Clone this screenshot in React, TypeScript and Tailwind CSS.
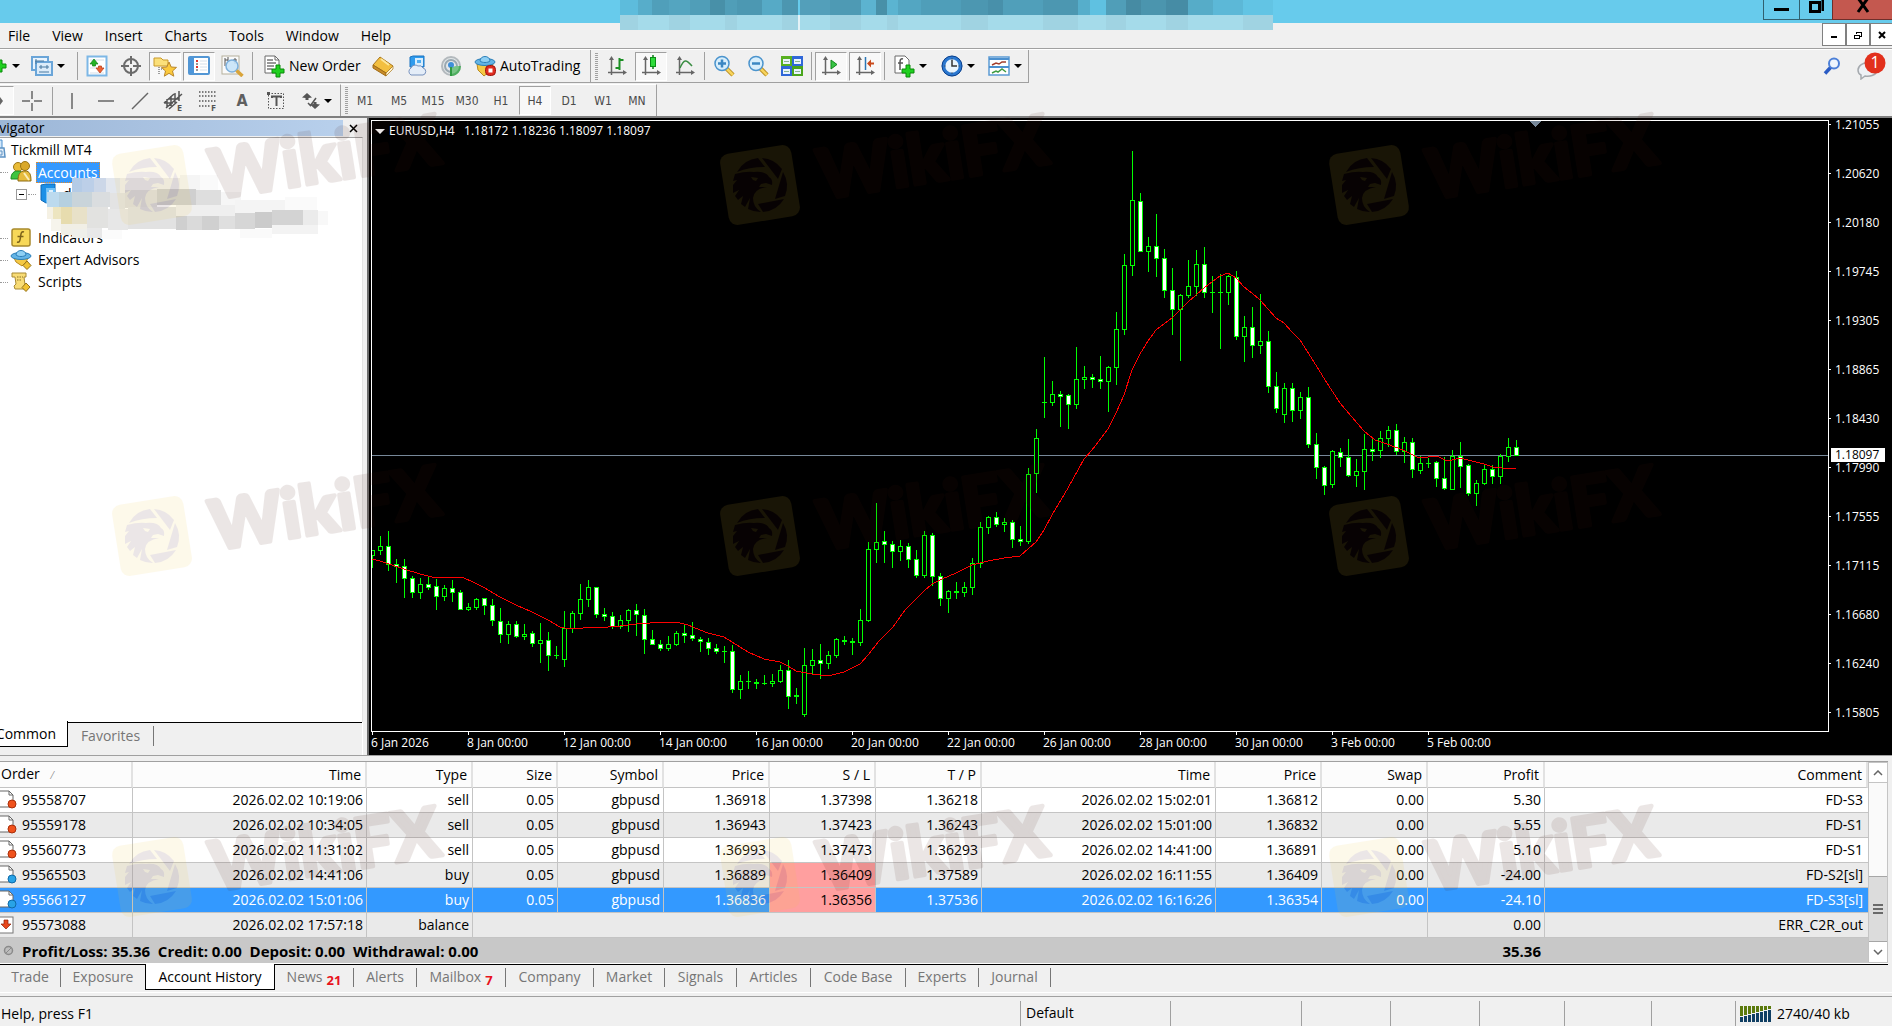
import type { ReactNode } from 'react';
import clsx from 'clsx';

/* ---------- data ---------- */

// high, body top, body bottom, low, 1 = bearish (white body)
const candles: number[][] = [
  [429, 429, 435, 447, 0], [415, 425, 430, 434, 0], [410, 425, 444, 450, 1], [438, 443, 446, 462, 1],
  [438, 445, 458, 477, 1], [455, 457, 472, 477, 1], [457, 463, 472, 478, 0], [455, 463, 467, 469, 1],
  [458, 465, 476, 489, 1], [464, 467, 476, 480, 0], [459, 467, 472, 481, 1], [469, 471, 489, 489, 1],
  [482, 486, 489, 490, 0], [477, 478, 487, 489, 0], [477, 477, 485, 494, 1], [478, 484, 500, 505, 1],
  [487, 500, 514, 522, 1], [500, 503, 514, 523, 0], [500, 503, 516, 517, 1], [503, 513, 516, 519, 0],
  [510, 512, 523, 526, 1], [502, 519, 523, 542, 0], [511, 519, 535, 550, 1], [525, 534, 535, 538, 0],
  [490, 507, 539, 546, 0], [490, 492, 508, 512, 0], [463, 478, 493, 499, 0], [459, 466, 479, 486, 0],
  [466, 466, 494, 497, 1], [487, 493, 496, 500, 1], [491, 495, 506, 508, 1], [494, 499, 506, 508, 0],
  [488, 489, 500, 511, 0], [483, 489, 494, 515, 1], [488, 494, 519, 533, 1], [509, 518, 524, 524, 1],
  [519, 523, 528, 530, 1], [515, 523, 528, 530, 0], [510, 512, 524, 525, 0], [503, 512, 515, 522, 1],
  [501, 514, 518, 520, 1], [516, 518, 521, 531, 1], [517, 521, 528, 534, 1], [523, 527, 531, 533, 1],
  [525, 530, 531, 542, 0], [524, 530, 569, 572, 1], [554, 560, 569, 578, 0], [550, 560, 561, 568, 0],
  [558, 561, 563, 568, 1], [554, 562, 563, 564, 0], [553, 560, 563, 566, 0], [544, 549, 561, 562, 0],
  [539, 549, 576, 588, 1], [567, 574, 576, 583, 0], [527, 544, 594, 596, 0], [528, 539, 545, 553, 0],
  [523, 539, 543, 558, 1], [530, 534, 543, 548, 0], [517, 518, 535, 537, 0], [515, 519, 521, 524, 1],
  [517, 520, 522, 534, 1], [488, 499, 522, 525, 0], [421, 428, 500, 501, 0], [382, 421, 429, 442, 0],
  [410, 420, 424, 442, 1], [420, 423, 431, 447, 1], [419, 425, 431, 440, 0], [422, 425, 439, 447, 1],
  [429, 438, 455, 457, 1], [410, 414, 455, 457, 0], [412, 414, 456, 465, 1], [452, 455, 478, 485, 1],
  [469, 470, 478, 492, 0], [461, 470, 472, 478, 0], [461, 466, 472, 476, 0], [437, 442, 467, 474, 0],
  [401, 406, 443, 447, 0], [395, 396, 407, 413, 0], [391, 396, 404, 406, 1], [397, 401, 404, 411, 0],
  [399, 401, 419, 427, 1], [405, 418, 421, 425, 1], [347, 353, 421, 423, 0], [308, 317, 353, 372, 0],
  [236, 281, 282, 297, 0], [260, 273, 282, 285, 0], [270, 273, 276, 306, 1], [273, 274, 284, 308, 1],
  [226, 258, 284, 288, 0], [245, 256, 259, 268, 0], [253, 256, 259, 267, 1], [235, 258, 261, 268, 1],
  [245, 246, 261, 291, 0], [191, 208, 247, 264, 0], [133, 144, 209, 214, 0], [30, 79, 145, 155, 0],
  [72, 80, 131, 131, 1], [116, 125, 131, 151, 0], [93, 125, 138, 156, 1], [128, 137, 170, 177, 1],
  [147, 169, 189, 214, 1], [173, 174, 189, 240, 0], [139, 165, 175, 177, 0], [129, 143, 166, 175, 0],
  [126, 143, 172, 177, 1], [155, 171, 172, 192, 0], [153, 171, 172, 228, 0], [154, 155, 172, 184, 0],
  [150, 156, 216, 219, 1], [195, 206, 216, 241, 0], [186, 206, 225, 237, 1], [173, 220, 225, 233, 0],
  [210, 220, 266, 272, 1], [251, 265, 288, 292, 1], [262, 267, 294, 302, 0], [262, 267, 290, 301, 1],
  [271, 276, 290, 298, 0], [266, 276, 324, 327, 1], [312, 323, 347, 358, 1], [345, 346, 365, 374, 1],
  [329, 330, 364, 367, 0], [327, 331, 337, 346, 1], [318, 336, 355, 356, 1], [338, 350, 355, 366, 0],
  [313, 328, 351, 369, 0], [317, 328, 331, 340, 1], [310, 317, 330, 337, 0], [305, 309, 318, 326, 0],
  [303, 309, 331, 334, 1], [316, 321, 331, 342, 0], [317, 321, 349, 357, 1], [335, 342, 350, 353, 0],
  [337, 342, 343, 347, 0], [340, 341, 358, 366, 1], [336, 357, 368, 369, 1], [329, 335, 369, 369, 0],
  [321, 335, 346, 367, 1], [343, 344, 373, 375, 1], [359, 362, 373, 385, 0], [344, 348, 363, 364, 0],
  [344, 348, 356, 363, 1], [333, 335, 356, 363, 0], [317, 326, 336, 341, 0], [319, 326, 335, 335, 1],
];

const movingAverage =
  '372,559 380,561 392,565 404,569 420,574 432,577 440,577 448,577 462,577 473,582 483,587 500,597 516,605 532,612 548,620 560,627 565,628 583,628 608,627 620,626 636,624 650,623 658,622 680,623 688,625 700,630 708,633 724,637 732,642 748,652 764,659 780,662 788,666 796,671 812,674 820,675 832,675 844,672 860,664 868,655 879,641 893,627 905,610 916,599 924,591 932,584 942,579 956,573 972,565 988,561 1004,558 1020,556 1036,542 1044,530 1052,515 1068,488 1084,459 1092,450 1108,429 1116,413 1124,395 1132,370 1140,354 1148,341 1156,330 1172,318 1180,310 1188,302 1196,295 1204,288 1212,282 1220,276 1228,273 1236,278 1244,287 1252,293 1260,300 1268,309 1276,318 1284,323 1292,332 1300,340 1307,351 1319,370 1325,380 1340,403 1357,423 1364,431 1375,440 1387,444 1403,450 1417,457 1428,457 1437,456 1445,460 1452,460 1460,458 1472,461 1484,464 1493,467 1502,468 1513,468 1516,469';

const prices = [
  '1.21055', '1.20620', '1.20180', '1.19745', '1.19305', '1.18865', '1.18430',
  '1.17990', '1.17555', '1.17115', '1.16680', '1.16240', '1.15805',
];

const dates = [
  '6 Jan 2026', '8 Jan 00:00', '12 Jan 00:00', '14 Jan 00:00', '16 Jan 00:00', '20 Jan 00:00',
  '22 Jan 00:00', '26 Jan 00:00', '28 Jan 00:00', '30 Jan 00:00', '3 Feb 00:00', '5 Feb 00:00',
];

interface Order {
  id: string;
  open: string;
  type: string;
  price?: string;
  sl?: string;
  tp?: string;
  close?: string;
  closePrice?: string;
  profit: string;
  comment: string;
  stopped?: boolean;
  selected?: boolean;
}

const orders: Order[] = [
  { id: '95558707', open: '2026.02.02 10:19:06', type: 'sell', price: '1.36918', sl: '1.37398', tp: '1.36218', close: '2026.02.02 15:02:01', closePrice: '1.36812', profit: '5.30', comment: 'FD-S3' },
  { id: '95559178', open: '2026.02.02 10:34:05', type: 'sell', price: '1.36943', sl: '1.37423', tp: '1.36243', close: '2026.02.02 15:01:00', closePrice: '1.36832', profit: '5.55', comment: 'FD-S1' },
  { id: '95560773', open: '2026.02.02 11:31:02', type: 'sell', price: '1.36993', sl: '1.37473', tp: '1.36293', close: '2026.02.02 14:41:00', closePrice: '1.36891', profit: '5.10', comment: 'FD-S1' },
  { id: '95565503', open: '2026.02.02 14:41:06', type: 'buy', price: '1.36889', sl: '1.36409', tp: '1.37589', close: '2026.02.02 16:11:55', closePrice: '1.36409', profit: '-24.00', comment: 'FD-S2[sl]', stopped: true },
  { id: '95566127', open: '2026.02.02 15:01:06', type: 'buy', price: '1.36836', sl: '1.36356', tp: '1.37536', close: '2026.02.02 16:16:26', closePrice: '1.36354', profit: '-24.10', comment: 'FD-S3[sl]', stopped: true, selected: true },
  { id: '95573088', open: '2026.02.02 17:57:18', type: 'balance', profit: '0.00', comment: 'ERR_C2R_out' },
];

const columns = [
  { label: 'Order', width: 'w-[133px]' },
  { label: 'Time', width: 'w-[234px]' },
  { label: 'Type', width: 'w-[106px]' },
  { label: 'Size', width: 'w-[85px]' },
  { label: 'Symbol', width: 'w-[106px]' },
  { label: 'Price', width: 'w-[106px]' },
  { label: 'S / L', width: 'w-[106px]' },
  { label: 'T / P', width: 'w-[106px]' },
  { label: 'Time', width: 'w-[234px]' },
  { label: 'Price', width: 'w-[106px]' },
  { label: 'Swap', width: 'w-[106px]' },
  { label: 'Profit', width: 'w-[117px]' },
  { label: 'Comment', width: '' },
];

const terminalTabs = [
  { label: 'Trade', width: 'w-[61px]' },
  { label: 'Exposure', width: 'w-[84px]' },
  { label: 'Account History', width: 'w-[130px]', active: true },
  { label: 'News', width: 'w-[79px]', badge: '21' },
  { label: 'Alerts', width: 'w-[63px]' },
  { label: 'Mailbox', width: 'w-[89px]', badge: '7' },
  { label: 'Company', width: 'w-[88px]' },
  { label: 'Market', width: 'w-[71px]' },
  { label: 'Signals', width: 'w-[72px]' },
  { label: 'Articles', width: 'w-[74px]' },
  { label: 'Code Base', width: 'w-[95px]' },
  { label: 'Experts', width: 'w-[73px]' },
  { label: 'Journal', width: 'w-[72px]' },
];

/* ---------- icons ---------- */

function Svg({ children, w = 22, h = 22 }: { children: ReactNode; w?: number; h?: number }) {
  return (
    <svg width={w} height={h} viewBox={`0 0 ${w} ${h}`} fill="none" className="block shrink-0">
      {children}
    </svg>
  );
}

const plusPath = 'M4 0h4v4h4v4h-4v4h-4v-4h-4v-4h4z';

const Plus = ({ x, y }: { x: number; y: number }) => (
  <path d={plusPath} transform={`translate(${x} ${y})`} fill="#1fd01f" stroke="#0a8a0a" />
);

const ProfilesIcon = () => (
  <Svg>
    <rect x="1" y="2" width="16" height="13" fill="#eaf4fd" stroke="#6aa5d8" strokeWidth="2" />
    <rect x="5" y="7" width="16" height="13" fill="#dcecfa" stroke="#6aa5d8" strokeWidth="2" />
    <path d="M4 6h9M5 4v5M8 12h10M10 10v4M16 10v4M8 17h10" stroke="#49789f" />
  </Svg>
);

const MarketWatchIcon = () => (
  <Svg>
    <rect x="1.5" y="1.5" width="19" height="19" fill="#fff" stroke="#7db7e6" strokeWidth="2" />
    <path d="M4 18h14M4 13h14M4 5h14" stroke="#d5dde6" />
    <path d="M8 4l4 5H9.500v2h-3V9H4z" fill="#24b324" stroke="#12801a" strokeWidth=".7" />
    <path d="M14 18l-4-5h2.500v-2h3v2H18z" fill="#ee6236" stroke="#b93912" strokeWidth=".7" />
  </Svg>
);

const TargetIcon = () => (
  <Svg>
    <circle cx="11" cy="11" r="7" stroke="#6b6b6b" strokeWidth="2" />
    <path d="M11 1v8M11 13v8M1 11h8M13 11h8" stroke="#6b6b6b" strokeWidth="2" />
  </Svg>
);

const FolderStarIcon = () => (
  <Svg w={24}>
    <path d="M1 3h7l2 2h5v6H1z" fill="#fbe07a" stroke="#c9992a" />
    <path d="M6 12v8M8 14h4" stroke="#444" strokeDasharray="1 1" />
    <path d="M16 7l2.200 5 5.300.4-4 3.600 1.300 5.200-4.800-2.900-4.700 2.900 1.200-5.200-4-3.600 5.300-.4z" fill="#fbc93c" stroke="#b8862b" />
  </Svg>
);

const NavigatorIcon = () => (
  <Svg>
    <rect x="1" y="2" width="20" height="17" rx="1" fill="#fff" stroke="#5296d4" strokeWidth="2" />
    <rect x="2" y="3" width="4" height="15" fill="#4d96da" />
    <path d="M8 6h2M8 12h2" stroke="#e0342b" strokeWidth="2" />
    <path d="M8 9h2M8 15h2" stroke="#333" />
    <path d="M12 6h7M12 9h7M12 12h7M12 15h7" stroke="#d3dfea" />
  </Svg>
);

const TesterIcon = () => (
  <Svg w={24}>
    <rect x="1" y="1" width="17" height="18" fill="#fafafa" stroke="#b5b09c" />
    <path d="M4 3v8M7 2v4M14 3v6M4 5h3M12 5h4" stroke="#555" />
    <circle cx="11" cy="11" r="6" fill="#c7e3f8" fillOpacity=".9" stroke="#7db0dc" strokeWidth="1.500" />
    <path d="M15.500 15.500l6 5.500" stroke="#d9a43a" strokeWidth="3.500" />
  </Svg>
);

const NewOrderIcon = () => (
  <Svg w={21} h={23}>
    <path d="M1 1h10l4 4v13H1z" fill="#fff" stroke="#6b6b6b" />
    <path d="M11 1v4h4" stroke="#6b6b6b" />
    <path d="M3 5h6M3 8h9M3 11h7M3 14h5" stroke="#777" strokeWidth="1.500" />
    <Plus x={8} y={10} />
  </Svg>
);

const BookIcon = () => (
  <Svg>
    <path d="M8 2l13 9-7 7L1 10z" fill="#f3bf40" stroke="#a8761b" />
    <path d="M1 10l13 8v3L1 13z" fill="#c98c28" stroke="#a06c16" />
    <path d="M14 18l7-7v3l-7 7z" fill="#fff3cf" stroke="#a8761b" strokeWidth=".7" />
    <path d="M9 4l8 6" stroke="#fde69a" strokeWidth="2" />
  </Svg>
);

const CloudIcon = () => (
  <Svg>
    <path d="M4 2l3-1h11v11H4z" fill="#2f9bed" stroke="#1a73c0" />
    <rect x="9" y="3" width="8" height="8" fill="#d7edfd" />
    <path d="M11 5h4v3h-4z" fill="#52aef0" />
    <path d="M5 20a4 4 0 0 1 0-7 4.500 4.500 0 0 1 7-2 4 4 0 0 1 5 2 3.600 3.600 0 0 1 0 7z" fill="#e4edf8" stroke="#7791bd" />
  </Svg>
);

const SignalIcon = () => (
  <Svg>
    <circle cx="11" cy="11" r="9" fill="#e3e7e9" stroke="#b3b9bd" strokeWidth="2" />
    <circle cx="11" cy="11" r="6" stroke="#9aa8b0" strokeWidth="2" />
    <path d="M12 12v9a9 9 0 0 0 8-10h-4z" fill="#79c486" />
    <path d="M12 20a9 9 0 0 0 8-9" stroke="#4fae60" strokeWidth="2" />
    <circle cx="11" cy="10" r="3" fill="#3f8fd8" />
    <path d="M11 12v9" stroke="#2f9a41" strokeWidth="2" />
  </Svg>
);

const Hat = () => (
  <>
    <ellipse cx="11" cy="7" rx="10" ry="3.500" fill="#63b4e6" stroke="#2c7fb8" />
    <path d="M6 6c0-6 10-6 10 0-2 2-8 2-10 0z" fill="#8fd0f4" stroke="#2c7fb8" />
  </>
);

const AutoTradingIcon = () => (
  <Svg>
    <path d="M3 9h16l-3 7-6 5-6-6z" fill="#f5c945" stroke="#b98a1f" />
    <Hat />
    <rect x="11.500" y="10.500" width="10" height="10" rx="4" fill="#e02b1f" stroke="#9c1710" />
    <rect x="14.500" y="13.500" width="4" height="4" fill="#fff" />
  </Svg>
);

const Axes = ({ children }: { children: ReactNode }) => (
  <Svg w={20}>
    <path d="M4.500 3v17M1 17.500h16" stroke="#666" strokeWidth="1.500" />
    <path d="M4.500 1l-2.500 4h5zM20 17.500l-4-2.500v5z" fill="#666" />
    {children}
  </Svg>
);

const BarIcon = () => (
  <Axes><path d="M12.500 3v12M12.500 5h4M8.500 13h4" stroke="#1c8f25" strokeWidth="2" /></Axes>
);
const CandleIcon = () => (
  <Axes>
    <path d="M12 0v14" stroke="#0b7d16" strokeWidth="1.500" />
    <rect x="9.500" y="2.500" width="5" height="9" fill="#2fdc3b" stroke="#0b8d16" />
  </Axes>
);
const LineIcon = () => <Axes><path d="M5 13c4-9 6-9 12-2" stroke="#3a8d43" strokeWidth="1.500" /></Axes>;
const ScrollIcon = () => <Axes><path d="M10 5l6 4.500-6 4.500z" fill="#37c443" stroke="#15871f" /></Axes>;
const ShiftIcon = () => (
  <Axes>
    <path d="M10.500 2v13" stroke="#2a76b5" strokeWidth="1.500" />
    <path d="M12 8.500l4-4v3h3v2h-3v3z" fill="#c94a1c" />
  </Axes>
);

const ZoomIcon = ({ plus }: { plus?: boolean }) => (
  <Svg>
    <path d="M13 13l7 7" stroke="#b98d22" strokeWidth="4.500" />
    <path d="M13 13l7 7" stroke="#f7d35b" strokeWidth="2.500" />
    <circle cx="9" cy="8.500" r="7" fill="#d8eefb" stroke="#4b94cd" strokeWidth="1.500" />
    <path d={plus ? 'M5 8.500h8M9 4.500v8' : 'M5 8.500h8'} stroke="#3b87c2" strokeWidth="2.500" />
  </Svg>
);

const TileIcon = () => (
  <Svg>
    <rect x="0" y="1" width="11" height="10" fill="#58b020" />
    <rect x="11" y="1" width="11" height="10" fill="#2f67d8" />
    <rect x="0" y="11" width="11" height="10" fill="#2f67d8" />
    <rect x="11" y="11" width="11" height="10" fill="#4aa51c" />
    <path d="M2 4h7v5H2zM13 4h7v5h-7zM2 14h7v5H2zM13 14h7v5h-7z" fill="#e9f3fd" />
    <path d="M3 6.500h5M14 6.500h5M3 16.500h5M14 16.500h5" stroke="#8ab48f" />
  </Svg>
);

const IndicatorIcon = () => (
  <Svg w={21} h={23}>
    <path d="M1 1h10l4 4v13H1z" fill="#fff" stroke="#6b6b6b" />
    <path d="M9 4c-3-1-3 2-3 4v7M4 8h5" stroke="#555" strokeWidth="1.500" />
    <Plus x={8} y={10} />
  </Svg>
);

const ClockIcon = () => (
  <Svg>
    <circle cx="11" cy="11" r="8.500" fill="#e9f4fd" stroke="#2b78d0" strokeWidth="3.500" />
    <circle cx="11" cy="11" r="10" stroke="#0c408c" />
    <path d="M11 5v6h5" stroke="#333" strokeWidth="1.500" />
    <path d="M11 3.500v1M11 17.500v1M3.500 11h1M17.500 11h1" stroke="#333" />
  </Svg>
);

const TemplateIcon = () => (
  <Svg>
    <rect x="1" y="2" width="20" height="18" fill="#fff" stroke="#5b9ad3" strokeWidth="1.500" />
    <path d="M1 4h20M1 12h20" stroke="#4c90cf" strokeWidth="2" />
    <path d="M4 10l4-2 3 1 3-2h4" stroke="#a33f2c" strokeWidth="1.500" />
    <path d="M4 18l4-2 2 1 4-3 4 3" stroke="#3f9c43" strokeWidth="1.500" />
  </Svg>
);

const CrosshairIcon = () => (
  <Svg w={20} h={20}><path d="M10 0v8M10 12v8M0 10h8M12 10h8" stroke="#666" strokeWidth="1.500" /></Svg>
);
const VLineIcon = () => <Svg w={16} h={18}><path d="M8 1v16" stroke="#666" strokeWidth="1.500" /></Svg>;
const HLineIcon = () => <Svg w={16} h={16}><path d="M0 8h16" stroke="#666" strokeWidth="1.500" /></Svg>;
const TrendIcon = () => <Svg w={18} h={18}><path d="M1 17L17 1" stroke="#666" strokeWidth="1.500" /></Svg>;
const ChannelIcon = () => (
  <Svg>
    <path d="M1 13L11 4M3 18L19 4M6 19l8-7M4 9v8M8 6v10M12 3v10M16 1v10M1 13h9M5 9h11" stroke="#555" strokeWidth="1.500" />
    <text x="14" y="21" fontSize="9" fontWeight="700" fill="#555">E</text>
  </Svg>
);
const FiboIcon = () => (
  <Svg>
    <path d="M2 2h18M2 6h18M2 11h18M2 16h11" stroke="#555" strokeWidth="1.500" strokeDasharray="1.500 1.500" />
    <text x="14" y="21" fontSize="9" fontWeight="700" fill="#555">F</text>
  </Svg>
);
const LabelIcon = () => (
  <Svg w={18} h={18}>
    <rect x="1.500" y="1.500" width="15" height="15" stroke="#555" strokeDasharray="1.500 1.500" />
    <path d="M5 6V4.500h9V6M9.500 5v9" stroke="#555" strokeWidth="2" />
    <rect x="0" y="0" width="3" height="3" fill="#555" />
  </Svg>
);
const ArrowsIcon = () => (
  <Svg w={18} h={16}>
    <path d="M5 0l5 4.500L6.500 5v2h-3V5L0 4.500zM13 16l-5-4.500 3.500-.5V9h3v2l3.500.500z" fill="#555" />
    <path d="M6 10l2.500 2.500L14 5" stroke="#555" strokeWidth="1.500" />
  </Svg>
);

const SearchIcon = () => (
  <Svg w={18} h={18}>
    <path d="M8 10l-6 6.500" stroke="#2a5bc4" strokeWidth="3.500" />
    <circle cx="11" cy="6.500" r="5" fill="#eef5fd" stroke="#4d80d8" strokeWidth="2" />
  </Svg>
);

const ServerIcon = () => (
  <Svg>
    <path d="M10 1h8v9h-8z" fill="#d3e8fb" stroke="#4a90cf" />
    <path d="M5 9h15l1 9H5z" fill="#e4eef8" stroke="#5d93c4" strokeWidth="1.500" />
    <path d="M14 12h4v4h-4z" stroke="#5d93c4" />
  </Svg>
);
const AccountsIcon = () => (
  <Svg>
    <circle cx="8" cy="6" r="4.500" fill="#e9bb37" stroke="#9c7616" />
    <circle cx="15" cy="5" r="4.500" fill="#d9a82a" stroke="#9c7616" />
    <path d="M1 18c0-6 3-8 7-8s6 3 6 8z" fill="#3fc43f" stroke="#1a8a1f" />
    <path d="M8 20c0-7 2-10 7-10s6 4 6 10z" fill="#e6bb3c" stroke="#8d6b12" />
    <path d="M14 12l5 7" stroke="#fbeeb8" strokeWidth="2" />
  </Svg>
);
const IndicatorsIcon = () => (
  <Svg>
    <rect x="2" y="2" width="18" height="17" rx="2" fill="#f7d858" stroke="#a8892c" strokeWidth="1.500" />
    <path d="M14 5c-3-1-3 2-3.500 5S10 16 7 15M7.500 9.500h6" stroke="#7c621a" strokeWidth="1.500" />
  </Svg>
);
const ExpertsIcon = () => (
  <Svg>
    <path d="M4 9h14l-2 4-4 4-6-4z" fill="#f5c945" stroke="#b98a1f" />
    <Hat />
    <path d="M17 12l4 4.500-4 4-4-4z" fill="#f1c232" stroke="#96731a" />
  </Svg>
);
const ScriptsIcon = () => (
  <Svg>
    <path d="M2 2h14v4h-2l1 8 3 4H5l-1-3 2-2-1-7H2z" fill="#f8dc76" stroke="#a88a34" />
    <path d="M7 6h6M7 9h5" stroke="#8a7228" strokeDasharray="1.500 1" />
    <path d="M16 12l4 4-4 4.500-4-4z" fill="#f1c232" stroke="#96731a" />
  </Svg>
);
const AccountIcon = () => (
  <Svg w={20}>
    <path d="M2 2l5-1h9v15l-9 4-5-3z" fill="#1b8fe6" stroke="#0f68b5" />
    <path d="M7 5h9v12l-9 3z" fill="#6fc1f8" />
    <path d="M10 8h4" stroke="#fff" strokeWidth="1.500" />
  </Svg>
);

function OrderIcon({ type }: { type: string }) {
  if (type === 'balance') {
    return (
      <Svg w={17} h={18}>
        <rect x="-3" y="1" width="16" height="16" fill="#fff" stroke="#777" />
        <path d="M6 13L1 8h3V4h4v4h3z" fill="#e8481c" stroke="#8e2208" strokeWidth=".7" />
      </Svg>
    );
  }
  return (
    <Svg w={17} h={20}>
      <path d="M-3 1H9l4 4v12H-3z" fill="#fff" stroke="#666" />
      <path d="M9 1v4h4" stroke="#666" />
      <circle cx="12" cy="14" r="4" fill={type === 'sell' ? '#f0521c' : '#29a3e6'} stroke={type === 'sell' ? '#a92f0a' : '#0f6aa8'} />
    </Svg>
  );
}

/* ---------- toolbar parts ---------- */

const Caret = () => <span className="h-0 w-0 border-x-4 border-t-4 border-x-transparent border-t-black" />;
const Sep = () => <span className="mx-[2px] h-7 w-px shrink-0 bg-[#a0a0a0]" />;
const Grip = () => <span className="ml-1 h-[27px] w-[3px] shrink-0 bg-[repeating-linear-gradient(#a0a0a0_0_1px,#f0f0f0_1px_2px)]" />;

function Tool({ label, pressed, children }: { label: string; pressed?: boolean; children: ReactNode }) {
  return (
    <button
      type="button"
      aria-label={label}
      className={clsx(
        'mx-px flex h-[29px] w-8 shrink-0 items-center justify-center',
        pressed && 'border border-[#a0a0a0] border-r-white border-b-white bg-[#f8f8f8]',
      )}
    >
      {children}
    </button>
  );
}

function DropTool({ label, children }: { label: string; children: ReactNode }) {
  return (
    <button type="button" aria-label={label} className="flex h-[29px] w-[47px] shrink-0 items-center justify-center gap-1">
      {children}
      <Caret />
    </button>
  );
}

/* ---------- title bar ---------- */

const titleBlocks = [
  [18, '#5dbcdc'], [14, '#57adca'], [17, '#509fba'], [21, '#54a5c0'], [20, '#509eb8'], [15, '#4890a8'], [12, '#509eb8'],
  [25, '#4c98b2'], [20, '#56aac6'], [16, '#4c96b0'], [2, '#67cbec'], [30, '#539fba'], [31, '#4e9ab4'], [15, '#5cb3d0'],
  [11, '#4890a8'], [11, '#5bb4d1'], [23, '#53a6c2'], [40, '#4f9eb9'], [27, '#4c97b1'], [15, '#4890aa'], [40, '#509fba'],
  [35, '#4c97b1'], [12, '#56aecb'], [16, '#5fc1e1'], [20, '#509eb8'], [15, '#468ba3'], [25, '#4b95ae'], [22, '#468ca5'],
  [25, '#56acc8'], [30, '#5cb8d7'], [30, '#62c4e4'],
] as const;

function TitleBar() {
  return (
    <header className="relative flex h-[23px] shrink-0 justify-between bg-[#67cbec]">
      <div className="absolute top-0 left-[620px] z-10 flex h-[30px] w-[653px] overflow-hidden">
        {titleBlocks.map(([w, color], i) => (
          <div key={i} className="shrink-0" style={{ width: w }}>
            <div className="h-[15px]" style={{ background: color }} />
            <div className={clsx('h-[15px]', i === 10 ? 'bg-[#e4f2f7]' : i % 3 ? 'bg-[#a5dbea]' : 'bg-[#a0d3e2]')} />
          </div>
        ))}
      </div>
      <div />
      <div className="flex h-5 text-black">
        <button type="button" aria-label="Minimize" className="flex w-9 items-center justify-center border-b border-l border-[#31606f]">
          <span className="h-[3px] w-[15px] bg-black" />
        </button>
        <button type="button" aria-label="Restore" className="flex w-[33px] justify-center border-b border-l border-[#31606f]">
          <svg width="16" height="14" fill="none"><path d="M2.500 2.500h9v9h-9zM15 0v11" stroke="#000" strokeWidth="3" /></svg>
        </button>
        <button type="button" aria-label="Close" className="flex w-[60px] justify-center border-b border-l border-[#6e2f2b] bg-[#c4584f]">
          <svg width="14" height="13" fill="none"><path d="M2-2l10 14M12-2L2 12" stroke="#000" strokeWidth="3" /></svg>
        </button>
      </div>
    </header>
  );
}

function MenuBar() {
  return (
    <div className="flex h-[26px] shrink-0 justify-between border-b border-[#a0a0a0]">
      <nav className="flex items-center gap-[22px] pl-2">
        {['File', 'View', 'Insert', 'Charts', 'Tools', 'Window', 'Help'].map((m) => (
          <button key={m} type="button">{m}</button>
        ))}
      </nav>
      <div className="flex h-[23px]">
        <button type="button" aria-label="Minimize chart" className="flex w-6 items-end justify-center border border-[#808080] bg-white pb-[7px]">
          <span className="h-[2px] w-[6px] bg-black" />
        </button>
        <button type="button" aria-label="Restore chart" className="flex w-6 items-center justify-center border border-[#808080] bg-white">
          <svg width="8" height="8" fill="none" shapeRendering="crispEdges">
            <path d="M2 1h6M2.500 1v2M7.500 1v4h-2M0 4h5.500M.5 4v3.500h5V4" stroke="#000" />
          </svg>
        </button>
        <button type="button" aria-label="Close chart" className="flex w-[22px] items-center justify-center border border-r-0 border-[#808080] bg-white">
          <svg width="8" height="8"><path d="M1 1l6 6M7 1L1 7" stroke="#000" strokeWidth="2" /></svg>
        </button>
      </div>
    </div>
  );
}

function Toolbars() {
  return (
    <div className="flex h-[67px] shrink-0 justify-between border-t border-white">
      <div className="flex flex-col">
        <div className="flex h-[34px]">
          <div className="flex h-[33px] w-[591px] items-center border-r border-b border-[#a0a0a0]">
            <button type="button" aria-label="New chart" className="flex h-[29px] w-6 shrink-0 items-center gap-1">
              <Svg w={8} h={14}><Plus x={-6} y={1} /></Svg>
              <Caret />
            </button>
            <DropTool label="Profiles"><ProfilesIcon /></DropTool>
            <span className="w-1 shrink-0" />
            <Sep />
            <Tool label="Market Watch"><MarketWatchIcon /></Tool>
            <Tool label="Data Window"><TargetIcon /></Tool>
            <Tool label="Navigator" pressed><FolderStarIcon /></Tool>
            <Tool label="Terminal" pressed><NavigatorIcon /></Tool>
            <Tool label="Strategy Tester"><TesterIcon /></Tool>
            <Sep />
            <button type="button" className="flex w-[111px] shrink-0 items-center gap-1 pl-[9px] whitespace-nowrap">
              <NewOrderIcon />New Order
            </button>
            <Tool label="MetaEditor"><BookIcon /></Tool>
            <Tool label="Virtual Hosting"><CloudIcon /></Tool>
            <Tool label="Signals"><SignalIcon /></Tool>
            <button type="button" className="flex shrink-0 items-center gap-1 pl-[6px] whitespace-nowrap">
              <AutoTradingIcon />AutoTrading
            </button>
          </div>
          <div className="flex h-[33px] items-center border-r border-b border-[#a0a0a0]">
            <Grip />
            <span className="w-[2px]" />
            <Tool label="Bar Chart"><BarIcon /></Tool>
            <Tool label="Candlesticks" pressed><CandleIcon /></Tool>
            <Tool label="Line Chart"><LineIcon /></Tool>
            <Sep />
            <Tool label="Zoom In"><ZoomIcon plus /></Tool>
            <Tool label="Zoom Out"><ZoomIcon /></Tool>
            <Tool label="Tile Windows"><TileIcon /></Tool>
            <Sep />
            <Tool label="Auto Scroll" pressed><ScrollIcon /></Tool>
            <Tool label="Chart Shift" pressed><ShiftIcon /></Tool>
            <Sep />
            <DropTool label="Indicators"><IndicatorIcon /></DropTool>
            <DropTool label="Periods"><ClockIcon /></DropTool>
            <DropTool label="Templates"><TemplateIcon /></DropTool>
          </div>
        </div>
        <div className="flex h-8">
          <div className="flex w-[341px] items-center border-t border-r border-t-white border-r-[#a0a0a0]">
            <button type="button" aria-label="Cursor" className="flex h-[29px] w-[14px] shrink-0 items-center border-y border-r border-t-[#a0a0a0] border-r-white border-b-white bg-[#f8f8f8]">
              <Svg w={6} h={10}><path d="M0 1l3 4-3 4z" fill="#666" /></Svg>
            </button>
            <span className="w-px" />
            <Tool label="Crosshair"><CrosshairIcon /></Tool>
            <span className="w-px" />
            <Sep />
            <Tool label="Vertical Line"><VLineIcon /></Tool>
            <Tool label="Horizontal Line"><HLineIcon /></Tool>
            <Tool label="Trendline"><TrendIcon /></Tool>
            <Tool label="Equidistant Channel"><ChannelIcon /></Tool>
            <Tool label="Fibonacci Retracement"><FiboIcon /></Tool>
            <Tool label="Text"><span className="font-['DejaVu_Sans_Condensed',sans-serif] text-base font-bold text-[#5f5f5f]">A</span></Tool>
            <Tool label="Text Label"><LabelIcon /></Tool>
            <DropTool label="Arrows"><ArrowsIcon /></DropTool>
          </div>
          <div className="flex items-center border-t border-r border-t-white border-r-[#a0a0a0] pr-[2px] font-['DejaVu_Sans_Condensed',sans-serif] text-xs text-[#4a4a4a]">
            <Grip />
            {['M1', 'M5', 'M15', 'M30', 'H1', 'H4', 'D1', 'W1', 'MN'].map((tf) => (
              <Tool key={tf} label={tf} pressed={tf === 'H4'}>{tf}</Tool>
            ))}
          </div>
        </div>
      </div>
      <div className="flex h-8 items-center gap-4 pr-[6px]">
        <button type="button" aria-label="Search"><SearchIcon /></button>
        <button type="button" aria-label="Messages" className="relative h-[30px] w-[29px]">
          <svg width="29" height="28" fill="none" className="block">
            <path d="M12 11c-6-1-11 3-11 7 0 2 1 4 3 5v4l4-3c5 1 10-1 12-4" fill="#eef1f5" stroke="#a5a9ae" strokeWidth="1.500" />
            <circle cx="18" cy="11" r="10.500" fill="#e2301c" />
          </svg>
          <span className="absolute top-0 right-0 w-[22px] text-center text-base leading-[22px] text-white">1</span>
        </button>
      </div>
    </div>
  );
}

/* ---------- navigator ---------- */

const redacted: [number, number, number, number, string][] = [
  [72, 178, 10, 15, '#b4cbe6'], [82, 178, 12, 15, '#bccfe8'], [94, 178, 12, 15, '#ccd7e8'], [106, 178, 14, 15, '#e3e7ee'],
  [120, 178, 60, 15, '#efefef'], [180, 175, 20, 16, '#f5f5f5'], [200, 175, 18, 16, '#fafafa'],
  [47, 192, 12, 15, '#bcdaee'], [59, 192, 13, 15, '#b5d0e0'], [72, 192, 20, 15, '#c9d4da'], [92, 192, 18, 15, '#dadddf'],
  [110, 193, 15, 16, '#e3e3e3'], [125, 190, 32, 18, '#dedede'], [157, 189, 39, 16, '#cfcfcf'], [196, 190, 25, 15, '#dedede'],
  [221, 192, 20, 13, '#f6f6f6'], [47, 207, 6, 12, '#f5f1e4'], [53, 207, 8, 15, '#ede5c0'], [61, 207, 11, 17, '#e7dcae'],
  [72, 207, 15, 22, '#e8e1c8'], [87, 207, 21, 21, '#e2e2e0'], [108, 209, 20, 21, '#e7e7e7'], [128, 207, 48, 22, '#e2e2e2'],
  [176, 216, 11, 14, '#cfcfcf'], [187, 216, 15, 14, '#dadada'], [202, 215, 17, 15, '#d0d0d0'], [219, 215, 16, 14, '#dfdfdf'],
  [176, 205, 59, 11, '#efefef'], [235, 200, 50, 13, '#f4f4f4'], [285, 197, 32, 15, '#fafafa'], [235, 213, 20, 16, '#d6d6d6'],
  [255, 212, 17, 16, '#cbcbcb'], [272, 210, 31, 15, '#d3d3d3'], [303, 210, 15, 15, '#ebebeb'], [318, 211, 10, 14, '#f8f8f8'],
  [272, 225, 46, 9, '#f3f3f3'], [240, 229, 32, 9, '#fafafa'], [51, 219, 10, 12, '#f6f4ec'], [61, 224, 26, 11, '#f1efe6'],
  [87, 228, 15, 10, '#e8e8e8'], [72, 229, 15, 9, '#efefea'], [102, 230, 20, 9, '#fbfbfb'],
];

function TreeRow({ icon, children }: { icon?: ReactNode; children?: ReactNode }) {
  return (
    <li className="flex h-[22px] items-center">
      <span className={clsx('w-2 border-[#9a9a9a]', icon && 'border-b border-dotted')} />
      <span className="mx-px flex w-6 justify-center">{icon}</span>
      <span className="w-[2px]" />
      {children}
    </li>
  );
}

function Navigator() {
  return (
    <aside className="relative flex w-[367px] shrink-0 flex-col overflow-hidden pt-[2px] pr-1">
      <div className="flex h-[17px] justify-between">
        <h2 className="-ml-[19px] h-4 flex-1 bg-linear-to-r from-[#9bb5d6] to-[#b8d0ec] leading-4">Navigator</h2>
        <button type="button" aria-label="Close navigator" className="flex h-4 w-5 items-center justify-center">
          <svg width="9" height="9"><path d="M1 1l7 7M8 1L1 8" stroke="#000" strokeWidth="1.500" /></svg>
        </button>
      </div>
      <div className="flex-1 border-t border-r border-t-[#a0a0a0] border-r-[#e3e3e3] bg-white pt-px">
        <ul>
          <li className="flex h-[22px] items-center">
            <span className="-ml-4 mr-[5px]"><ServerIcon /></span>Tickmill MT4
          </li>
          <TreeRow icon={<AccountsIcon />}>
            <span className="border border-dotted border-[#e08a2b] bg-[#3399ff] px-px leading-[19px] text-white">Accounts</span>
          </TreeRow>
          <li className="flex h-[22px] items-center pl-4">
            <span className="flex h-[11px] w-[11px] items-center justify-center border border-[#9a9a9a]"><span className="h-px w-[5px] bg-black" /></span>
            <span className="mr-[3px] ml-px w-2 border-b border-dotted border-[#9a9a9a]" />
            <AccountIcon />
            <span className="pl-1">d</span>
          </li>
          <TreeRow />
          <TreeRow icon={<IndicatorsIcon />}><span className="px-[2px]">Indicators</span></TreeRow>
          <TreeRow icon={<ExpertsIcon />}><span className="px-[2px]">Expert Advisors</span></TreeRow>
          <TreeRow icon={<ScriptsIcon />}><span className="px-[2px]">Scripts</span></TreeRow>
        </ul>
      </div>
      <div className="flex h-[33px] items-start border-r border-white">
        <button type="button" className="relative z-10 -mt-px h-[26px] w-[68px] shrink-0 border-r border-b border-black bg-white pr-[11px] text-right">
          <span className="-ml-4">Common</span>
        </button>
        <div className="flex h-[26px] flex-1 items-center border-t border-black text-[#767676]">
          <button type="button" className="h-5 w-[86px] border-r border-[#767676] leading-[18px]">Favorites</button>
        </div>
      </div>
      {/* account name and server are hidden */}
      <svg className="absolute top-0 left-0 h-full w-full" shapeRendering="crispEdges">
        <g transform="translate(0 -118)">
          {redacted.map(([x, y, w, h, fill], i) => (
            <rect key={i} x={x} y={y} width={w} height={h} fill={fill} />
          ))}
        </g>
      </svg>
    </aside>
  );
}

/* ---------- chart ---------- */

function Candle({ index, values }: { index: number; values: number[] }) {
  const [high, top, bottom, low, bearish] = values;
  const x = index * 8;
  const h = bottom - top;
  return (
    <g>
      <rect x={x} y={high} width={1} height={Math.max(low - high, 1)} fill="#00ff00" />
      <rect x={x - 2} y={top} width={5} height={h} fill="#00ff00" />
      {h > 2 && <rect x={x - 1} y={top + 1} width={3} height={h - 2} fill={bearish ? '#fff' : '#000'} />}
    </g>
  );
}

function Chart() {
  return (
    <section className="flex min-w-0 flex-1 flex-col border-l-2 border-[#6b6b6b] bg-black pt-[2px] pl-[2px] font-['Open_Sans',sans-serif] text-xs text-white">
      <div className="flex min-h-0 flex-1">
        <div className="relative min-w-0 flex-1 border border-white">
          <svg className="absolute inset-0 h-full w-full" shapeRendering="crispEdges">
            <rect x="0" y="334" width="100%" height="1" fill="#778899" />
            {candles.map((c, i) => <Candle key={i} index={i} values={c} />)}
            <polyline points={movingAverage} transform="translate(-372 -121)" fill="none" stroke="#ff0000" />
            <path d="M1157 0h12l-6 6z" fill="#778899" />
          </svg>
          <p className="absolute top-[2px] left-[3px] flex items-center gap-1 leading-4">
            <svg width="10" height="5"><path d="M0 0h10L5 5z" fill="#fff" /></svg>
            <span className="whitespace-pre">EURUSD,H4   1.18172 1.18236 1.18097 1.18097</span>
          </p>
        </div>
        <div className="relative flex w-[63px] shrink-0 flex-col">
          {prices.map((p) => (
            <div key={p} className="flex h-[49px] shrink-0 gap-1 leading-[9px]">
              <span className="mt-1 h-px w-[2px] bg-white" />{p}
            </div>
          ))}
          <div className="absolute top-[328px] left-[2px] w-[54px] bg-white pl-1 leading-[14px] text-black">1.18097</div>
        </div>
      </div>
      <div className="flex h-[23px] shrink-0 overflow-hidden">
        {dates.map((d) => (
          <div key={d} className="w-24 shrink-0 whitespace-nowrap">
            <span className="ml-px block h-[3px] w-px bg-white" />
            <span className="block leading-4">{d}</span>
          </div>
        ))}
      </div>
    </section>
  );
}

/* ---------- terminal ---------- */

function OrderRow({ order, odd }: { order: Order; odd: boolean }) {
  const td = 'h-[25px] truncate border-r border-b border-[#c4c4c4] py-0 pr-[3px] pl-0 text-right';
  return (
    <tr className={order.selected ? 'bg-[#3399ff] text-white' : odd ? 'bg-[#eaeaea]' : 'bg-white'}>
      <td className={td}>
        <span className="flex items-center gap-[5px]"><OrderIcon type={order.type} />{order.id}</span>
      </td>
      <td className={td}>{order.open}</td>
      <td className={td}>{order.type}</td>
      {order.price ? (
        <>
          <td className={td}>0.05</td>
          <td className={td}>gbpusd</td>
          <td className={td}>{order.price}</td>
          <td className={clsx(td, order.stopped && 'bg-[#ff9f9f] text-black')}>{order.sl}</td>
          <td className={td}>{order.tp}</td>
          <td className={td}>{order.close}</td>
          <td className={td}>{order.closePrice}</td>
          <td className={td}>0.00</td>
        </>
      ) : (
        <td className={td} colSpan={8} />
      )}
      <td className={td}>{order.profit}</td>
      <td className={clsx(td, 'border-r-0 pr-[5px]')}>{order.comment}</td>
    </tr>
  );
}

function Terminal() {
  return (
    <section className="shrink-0 border-t border-[#a0a0a0] pt-[5px]">
      <div className="mr-1 flex border-t border-b border-t-[#a0a0a0] border-b-white">
        <table className="min-w-0 flex-1 table-fixed border-separate border-spacing-0 leading-5">
          <thead>
            <tr className="bg-[#fcfcfc]">
              {columns.map((c, i) => (
                <th
                  key={i}
                  scope="col"
                  className={clsx(
                    'h-[26px] border-r-2 border-b border-r-[#e2e2e2] border-b-[#c4c4c4] py-0 pr-1 pl-px font-normal',
                    i === 0 ? 'text-left' : 'text-right',
                    c.width,
                  )}
                >
                  {c.label}
                  {i === 0 && <span className="pl-3 text-[10px] text-[#8a8a8a]">⁄</span>}
                </th>
              ))}
            </tr>
          </thead>
          <tbody>
            {orders.map((o, i) => <OrderRow key={o.id} order={o} odd={i % 2 === 1} />)}
          </tbody>
          <tfoot>
            <tr className="bg-[#c8c8c8] text-[15px] font-bold">
              <td colSpan={11} className="h-[25px] p-0">
                <span className="flex items-center gap-2 pl-[3px] whitespace-pre">
                  <svg width="11" height="11" fill="none"><circle cx="5.500" cy="5.500" r="4" fill="#bdbdbd" stroke="#8a8a8a" strokeWidth="1.500" /><path d="M3 8l5-5" stroke="#8a8a8a" /></svg>
                  Profit/Loss: 35.36  Credit: 0.00  Deposit: 0.00  Withdrawal: 0.00
                </span>
              </td>
              <td className="py-0 pr-1 pl-0 text-right">35.36</td>
              <td />
            </tr>
          </tfoot>
        </table>
        <div className="flex w-5 shrink-0 flex-col border border-[#c4c4c4] bg-[#fafafa]">
          <button type="button" aria-label="Scroll up" className="flex h-5 items-center justify-center border-b border-[#c4c4c4] bg-white">
            <svg width="10" height="6" fill="none"><path d="M1 5l4-4 4 4" stroke="#666" strokeWidth="1.500" /></svg>
          </button>
          <div className="flex-1" />
          <div className="flex h-[66px] flex-col items-center justify-center gap-[2px] border-y border-[#a6a6a6] bg-[#dcdcdc]">
            <span className="h-[2px] w-[10px] bg-[#6a6a6a]" />
            <span className="h-[2px] w-[10px] bg-[#6a6a6a]" />
            <span className="h-[2px] w-[10px] bg-[#6a6a6a]" />
          </div>
          <button type="button" aria-label="Scroll down" className="flex h-5 items-center justify-center bg-white">
            <svg width="10" height="6" fill="none"><path d="M1 1l4 4 4-4" stroke="#666" strokeWidth="1.500" /></svg>
          </button>
        </div>
      </div>
      <div className="mr-1 flex h-7 items-start border-t border-black text-[#767676]">
        {terminalTabs.map((t) => (
          <button
            key={t.label}
            type="button"
            className={clsx(
              'flex shrink-0 items-center justify-center whitespace-nowrap',
              t.width,
              t.active
                ? '-mt-px h-[26px] border-x border-b border-black bg-white text-black'
                : 'mt-[3px] h-[19px] border-r border-[#767676] pb-[2px] leading-[17px]',
              t.label === 'Exposure' && 'border-r-0',
            )}
          >
            {t.label}
            {t.badge && <span className="mt-2 pl-1 text-[13px] font-bold text-[#e8121c]">{t.badge}</span>}
          </button>
        ))}
      </div>
      <div className="h-1 border-t border-white" />
    </section>
  );
}

function StatusBar() {
  const cell = 'h-[25px] shrink-0 border-l border-[#a0a0a0]';
  return (
    <footer className="flex h-[30px] shrink-0 items-center border-t border-[#a0a0a0] pt-1 leading-[23px]">
      <span className="flex-1 pl-px">Help, press F1</span>
      <span className={clsx(cell, 'w-[150px] pl-[5px]')}>Default</span>
      <span className={clsx(cell, 'w-[131px]')} />
      <span className={clsx(cell, 'w-[89px]')} />
      <span className={clsx(cell, 'w-[89px]')} />
      <span className={clsx(cell, 'w-[85px]')} />
      <span className={clsx(cell, 'w-[87px]')} />
      <span className={clsx(cell, 'w-[84px]')} />
      <span className={clsx(cell, 'flex w-[157px] items-center gap-[5px] pl-1')}>
        <svg width="32" height="16" shapeRendering="crispEdges">
          {[0, 1, 2, 3, 4, 5, 6, 7].map((i) => (
            <g key={i}>
              <rect x={i * 4} y="0" width="3" height={10 - i} fill="#5b7a0c" />
              <rect x={i * 4} y={11 - i} width="3" height={5 + i} fill="#103f63" />
            </g>
          ))}
        </svg>
        2740/40 kb
      </span>
    </footer>
  );
}

/* ---------- watermark ---------- */

function Watermark({ x, y }: { x: number; y: number }) {
  return (
    <g transform={`translate(${x} ${y})`}>
      <g opacity=".1">
        <rect x="-36" y="-36" width="72" height="72" rx="9" fill="#f2c83a" transform="rotate(-9)" />
        <g fill="#4a1a20">
          {/* shutter blades */}
          <path d="M-23-13A27 27 0 0 1-2-27L5-18Q-10-18-23-13z" />
          <path d="M2-27A27 27 0 0 1 22-16L18-6z" />
          <path d="M23-13A27 27 0 0 1 25 11L15 14z" />
          <path d="M-2 19L24 14A27 27 0 0 1 3 27z" />
          {/* eagle head */}
          <path
            fillRule="evenodd"
            d="M-25-11Q-14-14-6-13Q6-14 9-8Q13-6 12 0L6-2L1-1L-1 2L7 2Q-6 4-7 13Q-7 22 1 27A27 27 0 0 1-12 24L-10 13L-15 22L-19 19L-17 11L-22 15L-25 11L-21 5L-27 8L-27 0L-23-5L-27-4zM-9-8L-2-7L-4-4L-7-5z"
          />
        </g>
      </g>
      <text
        x="59"
        y="24"
        transform="rotate(-9)"
        opacity=".1"
        fill="#4a1a10"
        stroke="#4a1a10"
        strokeWidth="4"
        strokeLinejoin="round"
        fontSize="69"
        fontWeight="900"
        fontFamily="Lato, sans-serif"
      >
        WikiFX
      </text>
    </g>
  );
}

export default function App() {
  return (
    <div className="relative flex h-screen w-full flex-col overflow-hidden bg-[#f0f0f0] font-['Open_Sans',sans-serif] text-sm leading-5 text-black">
      <TitleBar />
      <MenuBar />
      <Toolbars />
      <main className="flex min-h-0 flex-1 border-t-2 border-[#7f7f7f]">
        <Navigator />
        <Chart />
      </main>
      <Terminal />
      <StatusBar />
      <svg className="pointer-events-none absolute inset-0 h-full w-full" aria-hidden="true">
        {[185, 536, 877].map((y) => [152, 760, 1369].map((x) => <Watermark key={`${x}-${y}`} x={x} y={y} />))}
      </svg>
    </div>
  );
}
